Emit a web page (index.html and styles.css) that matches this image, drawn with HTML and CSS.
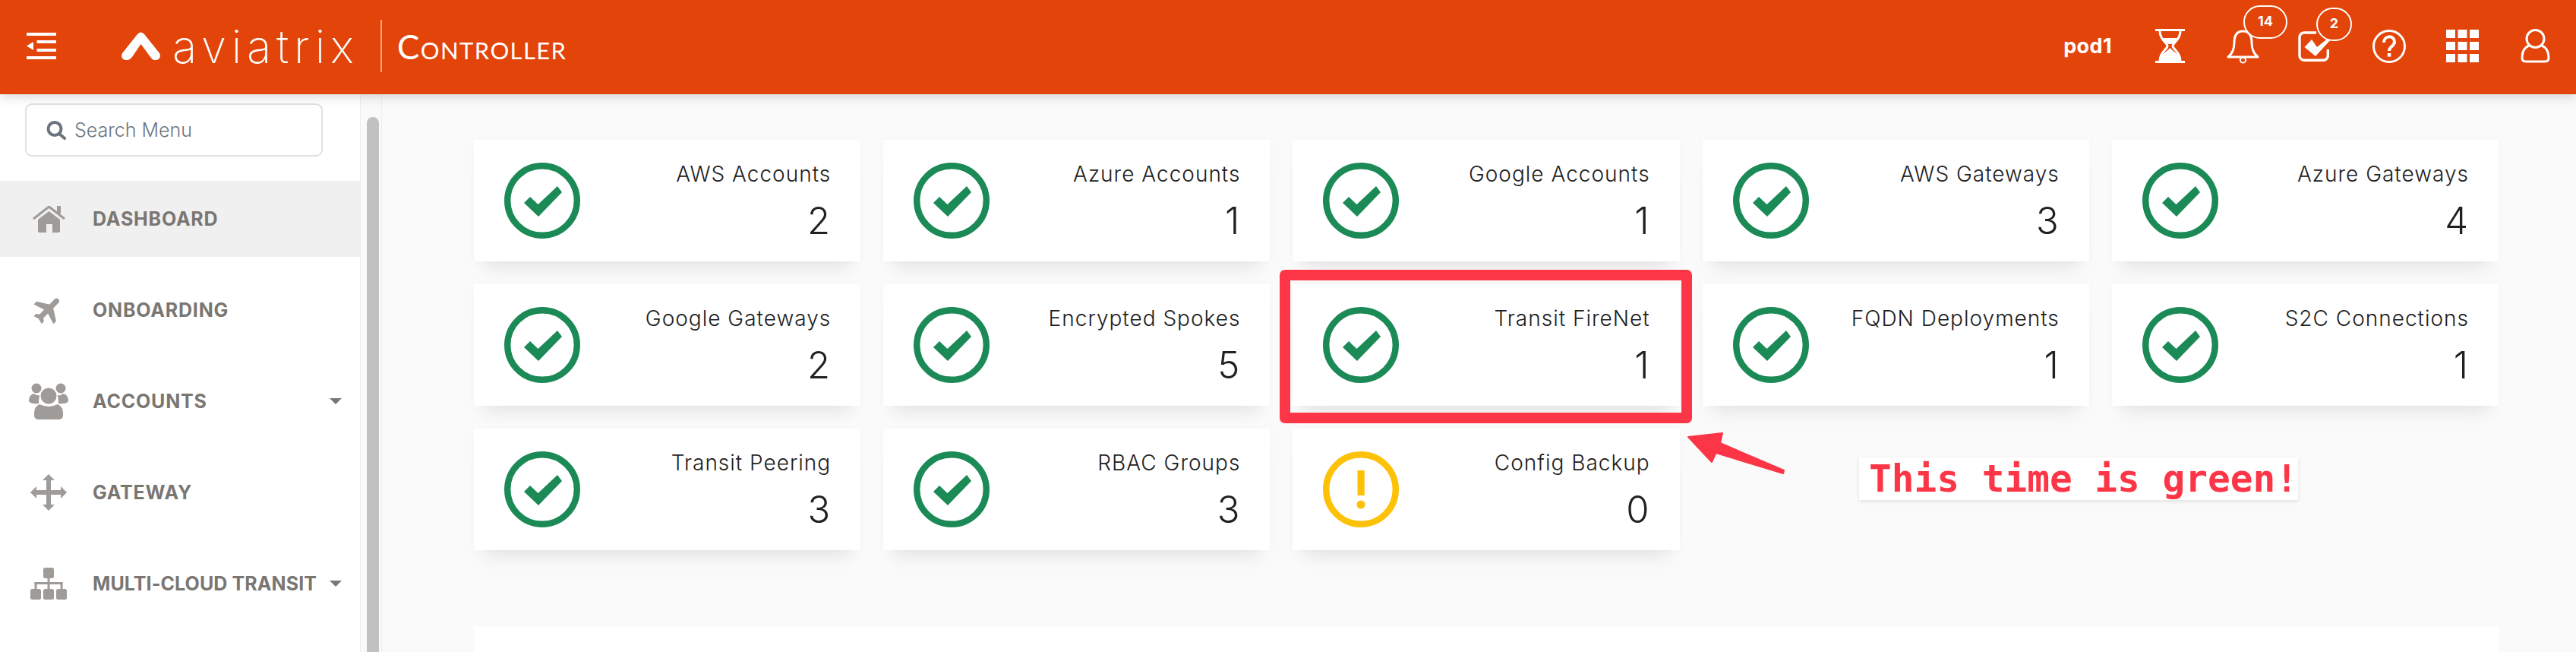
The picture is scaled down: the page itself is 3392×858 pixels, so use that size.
FILE: index.html
```html
<!DOCTYPE html>
<html>
<head>
  <title>Aviatrix Controller</title>
  <link rel="stylesheet" href="styles.css">
</head>
<body>

<svg class="defs">
  <symbol id="ok" viewBox="0 0 100 100">
    <circle cx="50" cy="50" r="45.8" fill="none" stroke="#1b8a56" stroke-width="8.4"/>
    <polygon points="26,53 34,45 44.5,55 70,31 76,39 45,71" fill="#1b8a56"/>
  </symbol>
  <symbol id="warn" viewBox="0 0 100 100">
    <circle cx="50" cy="50" r="45.8" fill="none" stroke="#fdc107" stroke-width="8.4"/>
    <rect x="45.5" y="25" width="9.2" height="33" fill="#fdc107"/>
    <circle cx="50" cy="70" r="5.5" fill="#fdc107"/>
  </symbol>
</svg>

<header class="topbar">
  <div class="brand">
    <svg class="menu-toggle" viewBox="0 0 39 35" fill="#fff">
      <rect width="39" height="4"/>
      <rect x="13.5" y="10" width="25.5" height="4"/>
      <rect x="13.5" y="21" width="25.5" height="4"/>
      <rect y="31" width="39" height="4"/>
      <polygon points="0,17.5 9,12 9,23"/>
    </svg>
    <svg class="logo-mark" viewBox="0 0 51 37" fill="#fff">
      <path d="M21 3 Q25.5 -2 30 3 L50 28 Q53 35 46 37 Q41 38 38 33 L25.5 16 L14 33 Q10 38 5 37 Q-2 35 1 28 Z"/>
    </svg>
    <span class="logo-word">aviatrix</span>
    <span class="logo-line"></span>
    <span class="logo-product">Controller</span>
  </div>

  <nav class="topnav">
    <span class="pod">pod1</span>

    <svg class="nav-icon hourglass" viewBox="0 0 39 45" fill="none" stroke="#fff" stroke-width="3">
      <path d="M0 1.5 H39 M0 43.5 H39"/>
      <path d="M6 3 C6 15 16 18 16 22.5 C16 27 6 30 6 42 M33 3 C33 15 23 18 23 22.5 C23 27 33 30 33 42"/>
      <path d="M8 12 H31 C29 16 24 18 22 20 H17 C15 18 10 16 8 12 Z M19.5 25 C16 30 6 33 5 42 H34 C33 33 23 30 19.5 25 Z" fill="#fff" stroke="none"/>
    </svg>

    <div class="nav-badged bell">
      <svg class="nav-icon" viewBox="0 0 43 46" fill="none" stroke="#fff" stroke-width="3">
        <circle cx="21.5" cy="41" r="3.6" stroke-width="2"/>
        <path d="M21.5 3 C12 3 10 11 10 18 C10 27 7 33 2 37 H41 C36 33 33 27 33 18 C33 11 31 3 21.5 3 Z" fill="#e24409" stroke-linejoin="round"/>
      </svg>
      <span class="badge badge-wide">14</span>
    </div>

    <div class="nav-badged tasks">
      <svg class="nav-icon" viewBox="0 0 41 40" fill="none" stroke="#fff" stroke-width="3.4">
        <path d="M24 2 H8 A6 6 0 0 0 2 8 V32 A6 6 0 0 0 8 38.3 H33 A6 6 0 0 0 39.3 32 V24"/>
        <polygon points="8.5,21 18,11 25,21 41,8 46,8 23,33" fill="#fff" stroke="none"/>
      </svg>
      <span class="badge">2</span>
    </div>

    <svg class="nav-icon help" viewBox="0 0 44 44" fill="none" stroke="#fff" stroke-width="3">
      <circle cx="22" cy="22" r="20.5"/>
      <path d="M15 17 C15 7 29 7 29 16 C29 22 22 22 22 28" stroke-width="4"/>
      <rect x="19.7" y="31" width="4.6" height="4.6" fill="#fff" stroke="none"/>
    </svg>

    <svg class="nav-icon apps" viewBox="0 0 43 43" fill="#fff">
      <rect width="12" height="11"/><rect x="15.5" width="12" height="11"/><rect x="31" width="12" height="11"/>
      <rect y="16" width="12" height="11"/><rect x="15.5" y="16" width="12" height="11"/><rect x="31" y="16" width="12" height="11"/>
      <rect y="32" width="12" height="11"/><rect x="15.5" y="32" width="12" height="11"/><rect x="31" y="32" width="12" height="11"/>
    </svg>

    <svg class="nav-icon user" viewBox="0 0 39 45" fill="none" stroke="#fff" stroke-width="3">
      <path d="M11 22 C4 25 2 31 2 38 C2 42 4 43 7 43 H32 C35 43 37 42 37 38 C37 31 35 25 28 22"/>
      <ellipse cx="19.5" cy="13" rx="11.5" ry="11.5"/>
    </svg>
  </nav>
</header>

<div class="layout">
  <aside class="sidebar">
    <div class="search">
      <svg class="search-icon" viewBox="0 0 26 25" fill="none" stroke="#6c757d" stroke-width="4" stroke-linecap="round">
        <circle cx="11" cy="10.5" r="8.5"/>
        <path d="M17 17 L24 23"/>
      </svg>
      <span>Search Menu</span>
    </div>

    <ul class="menu">
      <li class="menu-item active">
        <span class="menu-icon">
          <svg width="43" height="35" viewBox="0 0 43 35" fill="#9e9b98">
            <rect x="32" y="0" width="5" height="10"/>
            <path d="M1 17 L21.5 1 L42 17" fill="none" stroke="#9e9b98" stroke-width="3"/>
            <path d="M7 18 L21.5 7 L36 18 V33 A2 2 0 0 1 34 35 H26 V24 H18 V35 H9 A2 2 0 0 1 7 33 Z"/>
          </svg>
        </span>
        DASHBOARD
      </li>
      <li class="menu-item">
        <span class="menu-icon">
          <svg width="44" height="44" viewBox="0 0 24 24" fill="#9e9b98" stroke="#9e9b98" stroke-width="0.9">
            <path transform="rotate(45 12 12)" d="M21 16v-2l-8-5V3.5c0-.83-.67-1.5-1.5-1.5S10 2.67 10 3.5V9l-8 5v2l8-2.5V19l-2 1.5V22l3.5-1 3.5 1v-1.5L13 19v-5.5l8 2.5z"/>
          </svg>
        </span>
        ONBOARDING
      </li>
      <li class="menu-item">
        <span class="menu-icon">
          <svg width="52" height="48" viewBox="0 0 52 48" fill="#9e9b98">
            <circle cx="10" cy="7" r="6.5"/>
            <circle cx="42" cy="7" r="6.5"/>
            <circle cx="26" cy="17" r="10.5"/>
            <path d="M0 24 Q0 15 7 14 Q10 17 14 16 Q13 22 13 27 Q3 28 0 24 Z"/>
            <path d="M52 24 Q52 15 45 14 Q42 17 38 16 Q39 22 39 27 Q49 28 52 24 Z"/>
            <path d="M7 40 Q7 31 14 28 Q26 34 38 28 Q45 31 45 40 V42 Q45 48 39 48 H13 Q7 48 7 42 Z"/>
          </svg>
        </span>
        ACCOUNTS
        <span class="caret"></span>
      </li>
      <li class="menu-item">
        <span class="menu-icon">
          <svg width="48" height="48" viewBox="0 0 48 48" fill="#9e9b98">
            <path d="M24 0 L32 8 H27 V21 H40 V16 L48 24 L40 32 V27 H27 V40 H32 L24 48 L16 40 H21 V27 H8 V32 L0 24 L8 16 V21 H21 V8 H16 Z"/>
          </svg>
        </span>
        GATEWAY
      </li>
      <li class="menu-item menu-item-long">
        <span class="menu-icon">
          <svg width="48" height="42" viewBox="0 0 48 42" fill="#9e9b98">
            <rect x="17" width="14" height="14" rx="2.5"/>
            <rect y="28" width="14" height="14" rx="2.5"/>
            <rect x="17" y="28" width="14" height="14" rx="2.5"/>
            <rect x="34" y="28" width="14" height="14" rx="2.5"/>
            <rect x="22.5" y="14" width="3" height="14"/>
            <rect x="5.5" y="19" width="37" height="3"/>
            <rect x="5.5" y="19" width="3" height="9"/>
            <rect x="39.5" y="19" width="3" height="9"/>
          </svg>
        </span>
        MULTI-CLOUD TRANSIT
        <span class="caret"></span>
      </li>
    </ul>
  </aside>

  <div class="scroll-track"><div class="scroll-thumb"></div></div>

  <main class="content">
    <section class="cards">
      <div class="card"><svg class="status"><use href="#ok"/></svg><div class="card-text"><div class="card-label">AWS Accounts</div><div class="card-num">2</div></div></div>
      <div class="card"><svg class="status"><use href="#ok"/></svg><div class="card-text"><div class="card-label">Azure Accounts</div><div class="card-num">1</div></div></div>
      <div class="card"><svg class="status"><use href="#ok"/></svg><div class="card-text"><div class="card-label">Google Accounts</div><div class="card-num">1</div></div></div>
      <div class="card"><svg class="status"><use href="#ok"/></svg><div class="card-text"><div class="card-label">AWS Gateways</div><div class="card-num">3</div></div></div>
      <div class="card"><svg class="status"><use href="#ok"/></svg><div class="card-text"><div class="card-label">Azure Gateways</div><div class="card-num">4</div></div></div>
      <div class="card"><svg class="status"><use href="#ok"/></svg><div class="card-text"><div class="card-label">Google Gateways</div><div class="card-num">2</div></div></div>
      <div class="card"><svg class="status"><use href="#ok"/></svg><div class="card-text"><div class="card-label">Encrypted Spokes</div><div class="card-num">5</div></div></div>
      <div class="card"><svg class="status"><use href="#ok"/></svg><div class="card-text"><div class="card-label">Transit FireNet</div><div class="card-num">1</div></div></div>
      <div class="card"><svg class="status"><use href="#ok"/></svg><div class="card-text"><div class="card-label">FQDN Deployments</div><div class="card-num">1</div></div></div>
      <div class="card"><svg class="status"><use href="#ok"/></svg><div class="card-text"><div class="card-label">S2C Connections</div><div class="card-num">1</div></div></div>
      <div class="card"><svg class="status"><use href="#ok"/></svg><div class="card-text"><div class="card-label">Transit Peering</div><div class="card-num">3</div></div></div>
      <div class="card"><svg class="status"><use href="#ok"/></svg><div class="card-text"><div class="card-label">RBAC Groups</div><div class="card-num">3</div></div></div>
      <div class="card"><svg class="status"><use href="#warn"/></svg><div class="card-text"><div class="card-label">Config Backup</div><div class="card-num">0</div></div></div>
    </section>
    <section class="panel"></section>
  </main>
</div>

<!-- annotation drawn over the screenshot -->
<div class="mark-box"></div>
<svg class="mark-arrow" width="134" height="64" viewBox="0 0 134 64" fill="#fc3647" stroke="#fc3647" stroke-width="2" stroke-linejoin="round">
  <polygon points="3,10 48,5 45,18 129,54 128,58 39.5,31 34,43"/>
</svg>
<div class="mark-note">This time is green!</div>

</body>
</html>
```

FILE: styles.css
```css
html, body {
  margin: 0;
  padding: 0;
  height: 858px;
  overflow: hidden;
}

body {
  position: relative;
  font-family: Inter, "Noto Sans", sans-serif;
  background-color: #fafafa;
  color: #212121;
}

.defs {
  position: absolute;
  width: 0;
  height: 0;
}

/* top bar */
.topbar {
  position: relative;
  z-index: 2;
  height: 124px;
  box-sizing: border-box;
  padding: 0 34px 3px 35px;
  display: flex;
  justify-content: space-between;
  align-items: center;
  background-color: #e24409;
  box-shadow: 0 2px 14px rgba(60, 70, 90, 0.25);
  color: #fff;
}

.brand {
  display: flex;
  align-items: center;
}

.menu-toggle {
  width: 39px;
  height: 35px;
}

.logo-mark {
  width: 51px;
  height: 37px;
  margin-left: 86px;
}

.logo-word {
  margin-left: 16px;
  width: 242px;
  font-size: 60px;
  font-weight: 200;
  line-height: 70px;
  letter-spacing: 6.8px;
}

.logo-line {
  width: 2px;
  height: 69px;
  margin-left: 32px;
  background-color: #f4a783;
}

.logo-product {
  margin-left: 20px;
  font-family: Lato, sans-serif;
  font-size: 44px;
  font-variant: small-caps;
  line-height: 60px;
  letter-spacing: 1.4px;
}

.topnav {
  display: flex;
  align-items: center;
}

.pod {
  font-size: 27px;
  font-weight: 700;
  letter-spacing: 0.4px;
  margin-right: 57px;
}

.nav-icon {
  display: block;
  overflow: visible;
}

.hourglass {
  width: 39px;
  height: 45px;
}

.nav-badged {
  position: relative;
}

.bell {
  width: 43px;
  margin-left: 55px;
}

.bell .nav-icon {
  width: 43px;
  height: 46px;
}

.tasks {
  width: 41px;
  margin-left: 51px;
}

.tasks .nav-icon {
  width: 41px;
  height: 40px;
}

.badge {
  position: absolute;
  top: -31px;
  left: 24px;
  width: 47px;
  height: 44px;
  box-sizing: border-box;
  border: 2px solid #fff;
  border-radius: 22px;
  background-color: #e24409;
  font-size: 18px;
  font-weight: 700;
  line-height: 38px;
  text-align: center;
}

.badge-wide {
  left: 22px;
  width: 58px;
}

.help {
  width: 44px;
  height: 44px;
  margin-left: 57px;
}

.apps {
  width: 43px;
  height: 43px;
  margin-left: 53px;
}

.user {
  width: 39px;
  height: 45px;
  margin-left: 55px;
}

/* sidebar */
.layout {
  display: flex;
  height: 734px;
}

.sidebar {
  width: 474px;
  flex: none;
  padding-top: 12px;
  box-sizing: border-box;
  background-color: #fff;
  color: #7a7672;
}

.search {
  width: 392px;
  height: 70px;
  box-sizing: border-box;
  margin-left: 33px;
  padding-left: 26px;
  display: flex;
  align-items: center;
  border: 2px solid #e0e0e0;
  border-radius: 9px;
  font-size: 25px;
  font-weight: 300;
  color: #6c757d;
}

.search-icon {
  width: 26px;
  height: 25px;
  margin-right: 11px;
}

.menu {
  list-style: none;
  margin: 32px 0 0;
  padding: 0;
}

.menu-item {
  height: 100px;
  margin-bottom: 20px;
  padding-right: 24px;
  display: flex;
  align-items: center;
  font-size: 25px;
  font-weight: 700;
  letter-spacing: 0.8px;
}

.menu-item-long {
  letter-spacing: 0.1px;
}

.menu-item.active {
  background-color: #f0f0f0;
}

.menu-icon {
  width: 52px;
  margin-left: 38px;
  margin-right: 32px;
  display: flex;
  justify-content: center;
}

.caret {
  margin-left: auto;
  border-top: 8px solid #7a7672;
  border-left: 8px solid transparent;
  border-right: 8px solid transparent;
}

.scroll-track {
  width: 29px;
  flex: none;
  box-sizing: border-box;
  padding: 30px 5px 0 8px;
  border-left: 1px solid #eee;
  border-right: 1px solid #eee;
}

.scroll-thumb {
  width: 16px;
  height: 100%;
  border-radius: 8px 8px 0 0;
  background-color: #c1c1c1;
}

/* dashboard */
.content {
  flex: 1;
  padding: 60px 102px 0 121px;
}

.cards {
  display: grid;
  grid-template-columns: repeat(5, 1fr);
  grid-auto-rows: 160px;
  gap: 30px;
}

.card {
  padding: 0 40px;
  display: flex;
  align-items: center;
  justify-content: space-between;
  background: #fff;
  box-shadow: 0 22px 22px -14px rgba(0, 0, 0, 0.09), 0 0 12px rgba(0, 0, 0, 0.02);
}

.status {
  width: 100px;
  height: 100px;
}

.card-text {
  text-align: right;
}

.card-label {
  font-size: 28px;
  font-weight: 300;
  line-height: 34px;
  letter-spacing: 1px;
  margin-right: -1px;
}

.card-num {
  margin-top: 20px;
  font-size: 49px;
  font-weight: 300;
  line-height: 50px;
}

.panel {
  height: 34px;
  margin-top: 100px;
  background: #fff;
}

/* annotation */
.mark-box {
  position: absolute;
  left: 1685px;
  top: 355px;
  width: 543px;
  height: 202px;
  box-sizing: border-box;
  border: 14px solid #fc3647;
  border-radius: 7px;
}

.mark-arrow {
  position: absolute;
  left: 2220px;
  top: 565px;
}

.mark-note {
  position: absolute;
  left: 2448px;
  top: 602px;
  width: 578px;
  height: 56px;
  box-sizing: border-box;
  padding-left: 13px;
  background: #fff;
  box-shadow: 0 2px 5px rgba(0, 0, 0, 0.1);
  color: #fc3647;
  font-family: "DejaVu Sans Mono", monospace;
  font-size: 49.4px;
  font-weight: 700;
  line-height: 56px;
  white-space: nowrap;
}
```
